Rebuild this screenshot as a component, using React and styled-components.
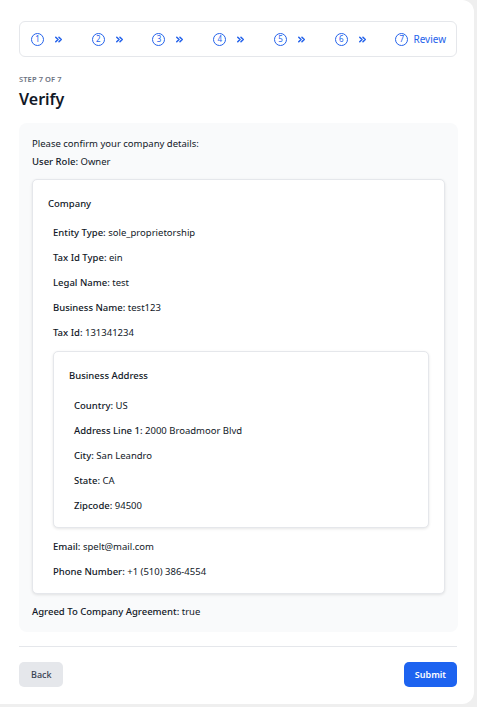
import React from 'react'
import styled, { createGlobalStyle } from 'styled-components'

const Global = createGlobalStyle`
  html, body { margin: 0; padding: 0; background: #efefef; }
  body { font-family: "Noto Sans", "Open Sans", sans-serif; color: #111827; }
  * { box-sizing: border-box; }
`

const Card = styled.div`
  width: 474px;
  height: 704px;
  background: #fff;
  border-radius: 0 12px 12px 0;
  padding: 21px 20px 0 19px;
  display: flex;
  flex-direction: column;
`

const Stepper = styled.div`
  height: 36px;
  width: 438px;
  border: 1px solid #e5e7eb;
  border-radius: 6px;
  display: flex;
  align-items: center;
  padding: 0 10px 0 11px;
`

const Step = styled.div`
  width: 61px;
  display: flex;
  align-items: center;
  gap: 9px;
  color: #2563eb;
  &:last-child { width: auto; gap: 5px; }
`

const Num = styled.span`
  width: 13px;
  height: 13px;
  border: 1.3px solid #2563eb;
  border-radius: 50%;
  display: flex;
  align-items: center;
  justify-content: center;
  font-size: 8px;
  line-height: 1;
  color: #2563eb;
`

const StepLabel = styled.span`
  font-size: 10px;
  color: #2563eb;
`

const StepCount = styled.div`
  margin-top: 17px;
  font-size: 7.5px;
  font-weight: 600;
  color: #6b7280;
  letter-spacing: 0.1px;
`

const Title = styled.h1`
  margin: 4px 0 0;
  font-size: 16px;
  font-weight: 600;
  color: #111827;
`

const Panel = styled.div`
  margin-top: 13px;
  width: 439px;
  background: #f9fafb;
  border-radius: 8px;
  padding: 14px 13px 14px 13px;
  display: flex;
  flex-direction: column;
`

const Line = styled.div`
  font-size: 9.5px;
  line-height: 13px;
  padding-left: ${p => p.$indent || 0}px;
  margin-top: ${p => p.$top || 0}px;
`

const Label = styled.span`
  font-weight: 500;
`

const Box = styled.div`
  background: #fff;
  border: 1px solid #e5e7eb;
  border-radius: 5px;
  box-shadow: 0 1px 3px rgba(0, 0, 0, 0.1);
  padding: ${p => p.$pad};
  margin: ${p => p.$margin};
  display: flex;
  flex-direction: column;
`

const BoxTitle = styled.div`
  font-size: 9.5px;
  line-height: 13px;
  font-weight: 500;
`

const Divider = styled.div`
  margin-top: 14px;
  height: 1px;
  width: 438px;
  background: #e5e7eb;
`

const Footer = styled.div`
  margin-top: 15px;
  width: 438px;
  display: flex;
  justify-content: space-between;
`

const Button = styled.button`
  height: 25px;
  padding: 0 ${p => p.$x}px;
  border: none;
  border-radius: 5px;
  font-family: inherit;
  font-size: 9px;
  font-weight: ${p => (p.$primary ? 600 : 500)};
  background: ${p => (p.$primary ? '#1d63f0' : '#e5e7eb')};
  color: ${p => (p.$primary ? '#fff' : '#374151')};
`

const Chevrons = () => (
  <svg width="11" height="11" viewBox="0 0 24 24" fill="none" stroke="#2563eb" strokeWidth="3.4" strokeLinecap="round" strokeLinejoin="round">
    <path d="m6 17 5-5-5-5" />
    <path d="m13 17 5-5-5-5" />
  </svg>
)

const Row = ({ label, value, indent, top }) => (
  <Line $indent={indent} $top={top}>
    <Label>{label}:</Label> {value}
  </Line>
)

export default function App() {
  const steps = [1, 2, 3, 4, 5, 6]
  return (
    <>
      <Global />
      <Card>
        <Stepper>
          {steps.map(n => (
            <Step key={n}>
              <Num>{n}</Num>
              <Chevrons />
            </Step>
          ))}
          <Step>
            <Num>7</Num>
            <StepLabel>Review</StepLabel>
          </Step>
        </Stepper>
        <StepCount>STEP 7 OF 7</StepCount>
        <Title>Verify</Title>
        <Panel>
          <Line>Please confirm your company details:</Line>
          <Row label="User Role" value="Owner" top={5} />
          <Box $pad="17px 15px 15px 15px" $margin="11px 0 0">
            <BoxTitle>Company</BoxTitle>
            <Row label="Entity Type" value="sole_proprietorship" indent={5} top={16} />
            <Row label="Tax Id Type" value="ein" indent={5} top={12} />
            <Row label="Legal Name" value="test" indent={5} top={12} />
            <Row label="Business Name" value="test123" indent={5} top={12} />
            <Row label="Tax Id" value="131341234" indent={5} top={12} />
            <Box $pad="17px 15px 15px 15px" $margin="12px 0 0 5px">
              <BoxTitle>Business Address</BoxTitle>
              <Row label="Country" value="US" indent={5} top={17} />
              <Row label="Address Line 1" value="2000 Broadmoor Blvd" indent={5} top={12} />
              <Row label="City" value="San Leandro" indent={5} top={12} />
              <Row label="State" value="CA" indent={5} top={12} />
              <Row label="Zipcode" value="94500" indent={5} top={12} />
            </Box>
            <Row label="Email" value="spelt@mail.com" indent={5} top={12} />
            <Row label="Phone Number" value="+1 (510) 386-4554" indent={5} top={12} />
          </Box>
          <Row label="Agreed To Company Agreement" value="true" top={11} />
        </Panel>
        <Divider />
        <Footer>
          <Button $x={12}>Back</Button>
          <Button $primary $x={11}>Submit</Button>
        </Footer>
      </Card>
    </>
  )
}
